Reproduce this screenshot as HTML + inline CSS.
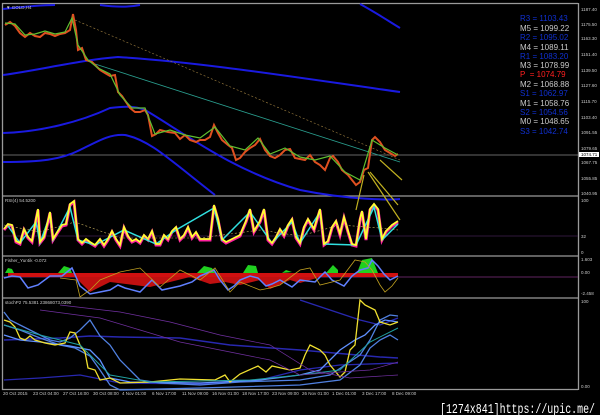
<!DOCTYPE html>
<html><head><style>
html,body{margin:0;padding:0;background:#000;width:600px;height:415px;overflow:hidden;font-family:"Liberation Sans",sans-serif}
svg{position:absolute;left:0;top:0}
</style></head><body>
<svg width="600" height="415" viewBox="0 0 600 415" xmlns="http://www.w3.org/2000/svg">
<rect width="600" height="415" fill="#000"/>
<g stroke="#9a9a9a" stroke-width="1.3" fill="none">
<line x1="2" y1="3.5" x2="578" y2="3.5"/>
<line x1="2" y1="196" x2="578" y2="196"/>
<line x1="2" y1="256" x2="578" y2="256"/>
<line x1="2" y1="298" x2="578" y2="298"/>
<line x1="2" y1="389.5" x2="578" y2="389.5"/>
<line x1="2.5" y1="3" x2="2.5" y2="390"/>
<line x1="578.5" y1="3" x2="578.5" y2="390"/>
</g>
<line x1="3" y1="155" x2="578" y2="155" stroke="#888" stroke-width="0.7"/>
<line x1="3" y1="236" x2="578" y2="236" stroke="#402050" stroke-width="0.7"/>
<line x1="3" y1="277" x2="578" y2="277" stroke="#803080" stroke-width="0.7"/>
<g stroke="#1a1ae0" stroke-width="2" fill="none">
<path d="M3,9 C30,6 45,5 55,5 M100,5 C115,7 130,7 140,5 M360,4 C375,12 390,22 400,28"/>
<path d="M3,75 C40,70 80,60 118,57 C200,62 300,78 400,92"/>
<path d="M3,133 C40,132 80,122 110,108 C125,106 135,106 145,110 C180,130 230,170 300,190 C350,200 390,200 400,199"/>
<path d="M3,162 C40,162 60,160 80,150 C100,140 110,134 125,135 C150,140 170,160 215,195"/>
</g>
<line x1="95" y1="64" x2="400" y2="162" stroke="#2aa090" stroke-width="0.8"/>
<line x1="75" y1="20" x2="400" y2="160" stroke="#a08040" stroke-width="0.6" stroke-dasharray="2,2"/>
<polyline fill="none" stroke="#e05020" stroke-width="2" points="5,25 10,22 15,26 20,33 25,37 30,33 35,36 40,37 45,33 50,34 55,36 60,34 65,33 70,30 73,14 76,30 78,50 82,48 86,60 92,62 96,66 100,70 105,73 110,76 115,75 118,92 122,96 126,102 130,108 135,112 140,112 145,110 148,115 152,136 156,134 160,130 168,132 175,133 180,139 185,135 190,140 196,142 200,140 205,140 210,137 214,125 218,133 222,140 228,145 232,148 236,160 240,158 245,152 250,148 255,145 260,139 265,150 270,156 275,158 280,155 285,150 290,149 295,158 300,159 305,160 310,155 315,162 320,165 325,170 330,158 333,156 338,162 342,170 348,175 352,180 356,185 360,182 364,170 368,168 372,140 375,137 380,142 385,150 390,153 395,156 398,154"/>
<polyline fill="none" stroke="#60c030" stroke-width="1.2" points="5,23 15,24 25,35 35,34 45,31 55,34 65,32 72,18 78,45 88,60 98,68 110,74 120,95 132,108 145,108 155,134 170,130 185,135 200,138 215,127 230,146 245,150 258,138 270,154 285,148 300,157 315,160 330,156 345,172 360,180 372,140 385,148 398,155"/>
<g stroke="#c0b020" stroke-width="1.2" fill="none">
<line x1="364" y1="175" x2="356" y2="210"/>
<line x1="368" y1="172" x2="400" y2="220"/>
<line x1="370" y1="172" x2="398" y2="205"/>
<line x1="380" y1="160" x2="402" y2="180"/>
</g>
<g font-size="8" font-family="Liberation Sans,sans-serif">
<text x="520" y="21" fill="#1030d0">R3 = 1103.43</text>
<text x="520" y="31" fill="#c8c8c8">M5 = 1099.22</text>
<text x="520" y="40" fill="#1030d0">R2 = 1095.02</text>
<text x="520" y="50" fill="#c8c8c8">M4 = 1089.11</text>
<text x="520" y="59" fill="#1030d0">R1 = 1083.20</text>
<text x="520" y="68" fill="#c8c8c8">M3 = 1078.99</text>
<text x="520" y="77" fill="#ff2020">P&#160;&#160;= 1074.79</text>
<text x="520" y="87" fill="#c8c8c8">M2 = 1068.88</text>
<text x="520" y="96" fill="#1030d0">S1 = 1062.97</text>
<text x="520" y="106" fill="#c8c8c8">M1 = 1058.76</text>
<text x="520" y="115" fill="#1030d0">S2 = 1054.56</text>
<text x="520" y="124" fill="#c8c8c8">M0 = 1048.65</text>
<text x="520" y="134" fill="#1030d0">S3 = 1042.74</text>
</g>
<g font-size="4.5" fill="#c8c8c8">
<text x="581" y="11">1187.40</text><text x="581" y="26">1175.50</text><text x="581" y="40">1163.30</text>
<text x="581" y="56">1151.40</text><text x="581" y="72">1139.50</text><text x="581" y="87">1127.60</text>
<text x="581" y="103">1115.70</text><text x="581" y="119">1103.40</text><text x="581" y="134">1091.55</text>
<text x="581" y="150">1079.65</text><text x="581" y="164">1067.75</text><text x="581" y="180">1055.85</text>
<text x="581" y="195">1040.95</text>
<text x="581" y="202">100</text><text x="581" y="238">32</text><text x="581" y="254">0</text>
<text x="581" y="261">1.603</text><text x="581" y="274">0.00</text><text x="581" y="295">-2.458</text>
<text x="581" y="303">100</text><text x="581" y="388">0.00</text>
</g>
<rect x="579" y="152" width="20" height="5" fill="#fff"/>
<text x="581" y="156" font-size="4.5" fill="#000">1074.71</text>
<g font-size="4.5" fill="#c8c8c8">
<text x="6" y="9">▼ GOLD,H4</text>
<text x="5" y="202">RSI(4) 54.5200</text>
<text x="5" y="262">Fisher_Yur4ik -0.072</text>
<text x="5" y="304">stochP2 75.5381 23868073.0390</text>
</g>
<polyline fill="none" stroke="#ff20a0" stroke-width="3" points="4,230 8,225 12,226 16,242 20,244 24,230 28,238 32,242 36,220 38,210 40,243 44,238 48,222 50,213 53,240 58,232 62,226 66,225 70,205 74,202 78,240 82,244 86,240 90,243 95,246 100,240 104,246 108,240 112,232 116,240 120,246 124,228 128,237 132,242 136,240 140,243 144,236 148,240 152,232 156,245 160,245 164,236 168,240 172,232 176,228 180,240 184,236 188,228 192,238 196,233 200,240 205,240 210,240 214,206 218,220 222,240 226,243 232,240 236,238 240,236 246,222 250,210 254,232 260,222 264,210 268,240 272,244 276,238 280,230 284,236 288,226 292,220 296,238 300,244 304,228 308,220 314,230 320,210 324,245 328,242 332,228 336,222 340,235 344,218 348,232 352,245 356,246 360,220 362,212 366,240 370,210 374,205 378,210 382,240 386,232 392,226 398,222"/>
<polyline fill="none" stroke="#30e0e0" stroke-width="1.5" points="8,226 20,243 36,222 40,243 50,215 53,240 70,207 78,240 95,245 124,230 156,244 176,230 214,208 222,240 250,212 272,243 292,222 300,243 320,212 324,244 356,245 374,207 382,240 398,224"/>
<polyline fill="none" stroke="#ffff30" stroke-width="1.8" points="4,229 8,224 12,225 16,241 20,243 24,229 28,237 32,241 36,219 38,209 40,242 44,237 48,221 50,212 53,239 58,231 62,225 66,224 70,204 74,201 78,239 82,243 86,239 90,242 95,245 100,239 104,245 108,239 112,231 116,239 120,245 124,227 128,236 132,241 136,239 140,242 144,235 148,239 152,231 156,244 160,244 164,235 168,239 172,231 176,227 180,239 184,235 188,227 192,237 196,232 200,239 205,239 210,239 214,205 218,219 222,239 226,242 232,239 236,237 240,235 246,221 250,209 254,231 260,221 264,209 268,239 272,243 276,237 280,229 284,235 288,225 292,219 296,237 300,243 304,227 308,219 314,229 320,209 324,244 328,241 332,227 336,221 340,234 344,217 348,231 352,244 356,245 360,219 362,211 366,239 370,209 374,204 378,209 382,239 386,231 392,225 398,221"/>
<polyline fill="none" stroke="#c8b060" stroke-width="0.6" stroke-dasharray="2,2" points="4,225 40,232 75,222 120,238 200,238 260,230 300,236 340,225 380,228 398,230"/>
<rect x="8" y="273" width="390" height="4" fill="#d01010"/>
<path d="M75,277 L90,292 L110,282 L150,287 L190,277 L210,284 L225,282 L240,285 L260,280 L270,289 L290,280 L300,283 L320,277Z" fill="#c01010"/>
<g fill="#20d020">
<path d="M5,273 L8,268 L12,269 L14,273Z"/>
<path d="M58,273 L64,266 L70,268 L72,273Z"/>
<path d="M197,273 L204,266 L212,268 L215,273Z"/>
<path d="M243,273 L248,265 L256,266 L258,273Z"/>
<path d="M282,273 L286,270 L292,272Z"/>
<path d="M326,273 L333,265 L338,270 L338,273Z"/>
<path d="M357,273 L362,260 L372,258 L378,273Z"/>
</g>
<polyline fill="none" stroke="#6080ff" stroke-width="1.5" points="4,278 12,276 20,277 28,288 38,285 50,276 62,276 72,268 80,286 90,294 100,292 110,290 118,285 125,288 140,292 152,280 162,290 180,286 192,282 200,276 214,270 220,280 228,290 234,286 240,280 250,276 258,278 266,286 272,284 280,280 292,287 300,280 315,282 325,272 332,280 336,282 344,286 352,276 360,270 368,268 372,260 378,266 384,274 390,280 398,276"/>
<polyline fill="none" stroke="#c0a020" stroke-width="0.8" points="60,278 76,280 80,297 90,290 100,280 120,272 140,268 160,287 180,270 200,280 215,268 230,292 240,282 260,290 270,288 280,285 300,270 310,268 320,285 340,280 355,260 365,262 372,270 380,285 385,292 392,286 398,278"/>
<g fill="none" stroke-width="1.3">
<polyline stroke="#2828b0" stroke-width="1.5" points="4,340 60,338 90,336 120,337 180,338 230,345 300,350 380,357 398,358"/>
<polyline stroke="#2828b0" points="300,300 360,320 380,325 398,318"/>
<polyline stroke="#2828b0" points="4,380 40,378 80,375 120,383 200,384 260,380 300,370 340,365 398,363"/>
<polyline stroke="#5080e0" points="4,312 10,320 20,325 30,330 40,335 50,340 60,342 70,338 80,330 90,320 100,336 110,345 120,360 130,370 140,380 160,383 200,385 240,382 300,380 330,375 360,355 370,340 380,320 390,315 398,316"/>
<polyline stroke="#5080e0" points="4,325 20,330 40,338 60,345 75,348 90,356 100,370 110,385 120,390 200,388 300,385 340,380 360,365 370,348 380,340 390,335 398,340"/>
<polyline stroke="#6090ff" points="4,335 20,340 40,342 70,346 90,350 100,360 110,378 130,382 200,383 260,380 300,375 320,370 340,350 355,340 365,335 375,325 385,320 398,322"/>
<polyline stroke="#f0e030" points="4,320 10,322 15,327 20,338 25,340 30,336 35,340 45,343 55,345 65,343 70,332 75,333 80,345 85,352 88,368 95,370 100,380 110,378 120,383 150,382 180,379 215,380 225,375 230,382 240,374 258,366 266,372 272,366 290,370 300,368 305,355 310,345 320,350 325,355 330,365 340,377 345,372 350,350 355,345 360,300 365,305 375,310 380,322 390,325 398,322"/>
<polyline stroke="#20a0a0" stroke-width="1" points="4,325 40,335 80,345 110,375 150,382 250,380 300,375 340,370 370,342 398,328"/>
<polyline stroke="#7030a0" stroke-width="0.7" points="40,310 100,318 140,330 180,342 230,352 270,360 300,375 340,372 370,370 398,362"/>
<polyline stroke="#7030a0" stroke-width="0.7" points="60,305 120,312 170,322 220,335 270,345 310,370 350,378 398,375"/>
</g>
<g font-size="4.5" fill="#c8c8c8">
<text x="3" y="395">20 Oct 2015</text><text x="33" y="395">23 Oct 04:00</text><text x="63" y="395">27 Oct 16:00</text>
<text x="93" y="395">30 Oct 08:00</text><text x="122" y="395">4 Nov 01:00</text><text x="152" y="395">6 Nov 17:00</text>
<text x="182" y="395">11 Nov 09:00</text><text x="212" y="395">16 Nov 01:00</text><text x="242" y="395">18 Nov 17:00</text>
<text x="272" y="395">23 Nov 09:00</text><text x="302" y="395">26 Nov 01:00</text><text x="332" y="395">1 Dec 01:00</text>
<text x="362" y="395">3 Dec 17:00</text><text x="392" y="395">8 Dec 09:00</text>
</g>
<text x="440" y="413" font-size="14" fill="#fff" font-family="Liberation Mono,monospace" textLength="155" lengthAdjust="spacingAndGlyphs">[1274x841]https://upic.me/</text>
</svg>
</body></html>
